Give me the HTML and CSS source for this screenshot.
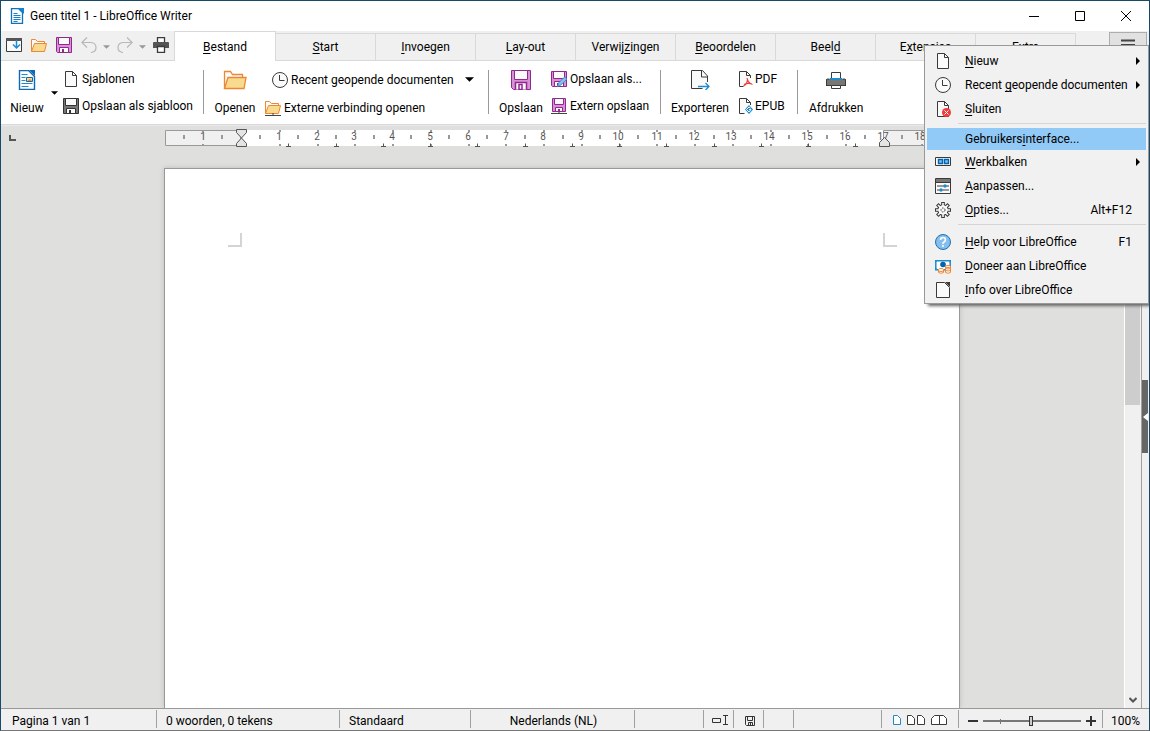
FILE: index.html
```html
<!DOCTYPE html>
<html lang="nl">
<head>
<meta charset="utf-8">
<title>Geen titel 1 - LibreOffice Writer</title>
<link rel="stylesheet" href="styles.css">
</head>
<body>
<svg class="sprite" aria-hidden="true">
  <defs>
    <symbol id="page" viewBox="0 0 16 16"><path d="M2.500 .5h7l4 4v11h-11z" fill="#fafafa" stroke="#3a3a38"/><path d="M9.500 .5v4h4" fill="none" stroke="#3a3a38"/></symbol>
    <symbol id="clock" viewBox="0 0 16 16"><circle cx="8" cy="8" r="7.500" fill="#fafafa" stroke="#3a3a38"/><path d="M7.500 3v5.500h5" fill="none" stroke="#3a3a38"/></symbol>
    <symbol id="folder" viewBox="0 0 24 20"><path d="M1.500 18.500v-17h6l2 3h10v3" fill="#fafafa" stroke="#ed8733" stroke-width="1.300"/><path d="M1.500 18.500 5 7.500h18l-2 11z" fill="#f8db8f" stroke="#ed8733" stroke-width="1.300"/></symbol>
    <symbol id="folder-small" viewBox="0 0 16 14"><path d="M.5 13.500V1.500h4l2 2h7v2" fill="#fafafa" stroke="#ed8733"/><path d="m.5 13.500 3-8h12l-2 8z" fill="#f8db8f" stroke="#ed8733"/></symbol>
    <symbol id="floppy" viewBox="0 0 20 20"><path d="M.5.5h19v19H2.500l-2-2z" fill="#d692d4" stroke="#92278f"/><path d="M3.500.5h13v9h-13z" fill="#fafafa" stroke="#92278f"/><path d="M4.500 19.500v-7h11v7" fill="#fafafa" stroke="#92278f" stroke-width="1.500"/><path d="M8 14.500h3v5H8z" fill="#fff" stroke="#92278f" stroke-width="1.500"/></symbol>
    <symbol id="floppy-small" viewBox="0 0 16 16"><path d="M.5.5h15v15h-14l-1-1z" fill="#d692d4" stroke="#92278f"/><path d="M2.500.5h11v7h-11z" fill="#fafafa" stroke="#92278f"/><path d="M3.500 15.500v-5h9v5z" fill="#fafafa" stroke="#92278f"/><path d="M6 12h2v4H6z" fill="#92278f"/></symbol>
    <symbol id="down" viewBox="0 0 8 4"><path d="M0 0h8L4 4z" fill="currentColor"/></symbol>
  </defs>
</svg>

<header class="titlebar">
  <svg class="i16" viewBox="0 0 16 16"><path d="M2.500.5h7l4 4v11h-11z" fill="#fff" stroke="#0e73bb" stroke-width="1.300"/><path d="M9 0h6v6z" fill="#0e85cd"/><path d="M4.500 5.500h4m-4 2h7m-7 2h7m-7 2h7m-7 2h4" stroke="#0e85cd"/></svg>
  <h1>Geen titel 1 - LibreOffice Writer</h1>
  <div class="window-buttons">
    <button aria-label="Minimaliseren"><svg class="i10" viewBox="0 0 10 10"><path d="M0 5.500h10" stroke="#000"/></svg></button>
    <button aria-label="Maximaliseren"><svg class="i10" viewBox="0 0 10 10"><path d="M.5.5h9v9h-9z" fill="none" stroke="#000"/></svg></button>
    <button aria-label="Sluiten"><svg class="i10" viewBox="0 0 10 10"><path d="m0 0 10 10M10 0 0 10" stroke="#000"/></svg></button>
  </div>
</header>

<nav class="tabbar">
  <div class="quick">
    <button aria-label="Werkbalk"><svg class="i16" viewBox="0 0 16 16"><path d="M.5 1.500h15v13H.5z" fill="#fafafa" stroke="#3a3a38"/><path d="M0 1h16v3H0z" fill="#555"/><path d="M10.500 3v8M7 7.500l3.500 3.500L14 7.500" fill="none" stroke="#1e8bcd" stroke-width="1.500"/></svg></button>
    <button aria-label="Openen"><svg class="i16"><use href="#folder-small"/></svg></button>
    <button aria-label="Opslaan"><svg class="i16"><use href="#floppy-small"/></svg></button>
    <button class="dim" aria-label="Ongedaan maken"><svg class="i16" viewBox="0 0 16 16"><path d="M6 .5.800 5.500 6 10.500M1 5.500h8q6 0 6 5 0 4.500-5 5" fill="none" stroke="currentColor" stroke-width="1.200"/></svg></button>
    <button class="dim arrow" aria-label="Meer ongedaan maken"><svg class="caret"><use href="#down"/></svg></button>
    <button class="dim" aria-label="Opnieuw"><svg class="i16" viewBox="0 0 16 16"><path d="m10 .5 5.200 5-5.200 5M15 5.500H7q-6 0-6 5Q1 15 6 15.500" fill="none" stroke="currentColor" stroke-width="1.200"/></svg></button>
    <button class="dim arrow" aria-label="Meer opnieuw"><svg class="caret"><use href="#down"/></svg></button>
    <button aria-label="Afdrukken"><svg class="i16" viewBox="0 0 16 16"><path d="M4.500 5V.5h7V5" fill="#fff" stroke="#3a3a38" stroke-width="1.300"/><path d="M0 6q0-1 1-1h14q1 0 1 1v5H0z" fill="#555"/><path d="M4.500 9.500h7v6h-7z" fill="#fff" stroke="#3a3a38" stroke-width="1.300"/></svg></button>
  </div>
  <div class="tabs">
    <button class="tab active"><u>B</u>estand</button>
    <button class="tab"><u>S</u>tart</button>
    <button class="tab"><u>I</u>nvoegen</button>
    <button class="tab"><u>L</u>ay-out</button>
    <button class="tab">Verwij<u>z</u>ingen</button>
    <button class="tab"><u>B</u>eoordelen</button>
    <button class="tab">Beel<u>d</u></button>
    <button class="tab">E<u>x</u>tensies</button>
    <button class="tab">E<u>x</u>tra</button>
  </div>
  <button class="burger" aria-label="Menu" aria-expanded="true"><svg viewBox="0 0 14 12"><path d="M0 1.500h14M0 6h14M0 10.500h14" stroke="#444" stroke-width="2"/></svg></button>
</nav>

<section class="ribbon">
  <div class="group g-new">
    <button class="big"><svg class="i20" viewBox="0 0 20 20"><path d="M2.500.5h9l6 6v13h-15z" fill="#fff" stroke="#0e69b5" stroke-width="1.400"/><path d="M12 0h6v6z" fill="#0e69b5"/><path d="M4.500 4.500h6m-6 3h4m-4 3h4m-4 3h11m-11 3h7" stroke="#1e8bcd"/><path d="M9.500 7.500h6v4h-6z" fill="#f8db8f" stroke="#0e69b5"/><path d="m10 11 3-2 2 2z" fill="#ed8733"/></svg>Nieuw</button>
    <button class="drop" aria-label="Nieuw, opties"><svg class="caret"><use href="#down"/></svg></button>
    <div class="stack">
      <button><svg class="i16 slim" viewBox="2 0 12 16"><use href="#page" width="16" height="16"/></svg>Sjablonen</button>
      <button><svg class="i16" viewBox="0 0 16 16"><path d="M.5.500h15v15h-15z" fill="#777" stroke="#333"/><path d="M2.500.5h11v7h-11zM3.500 15.500v-5h9v5z" fill="#fafafa" stroke="#333"/><path d="M6 12h2v4H6z" fill="#333"/></svg>Opslaan als sjabloon</button>
    </div>
  </div>
  <div class="group g-open">
    <button class="big"><svg class="i24"><use href="#folder"/></svg>Openen</button>
    <div class="stack">
      <button class="recent"><svg class="i16"><use href="#clock"/></svg>Recent geopende documenten<svg class="caret wide"><use href="#down"/></svg></button>
      <button><svg class="i16" viewBox="0 0 16 16"><use href="#folder-small" width="16" height="14"/><path d="M0 15.500h16M8 13v2" stroke="#444"/></svg>Externe verbinding openen</button>
    </div>
  </div>
  <div class="group g-save">
    <button class="big"><svg class="i20"><use href="#floppy"/></svg>Opslaan</button>
    <div class="stack">
      <button><svg class="i16" viewBox="0 0 16 16"><use href="#floppy-small" width="16" height="16"/><path d="m6.500 15.500 1-3.500 6-6 2.500 2-6 6z" fill="#83beec" stroke="#3986c6" stroke-width=".8"/></svg>Opslaan als...</button>
      <button><svg class="i16" viewBox="0 0 16 16"><path d="M1.500.5h13v13h-13z" fill="#d692d4" stroke="#92278f"/><path d="M3.500.5h9v6h-9zM4.500 13.500v-4h7v4z" fill="#fafafa" stroke="#92278f"/><path d="M7 11h2v3H7z" fill="#92278f"/><path d="M0 15.500h16M8 14v1" stroke="#444"/></svg>Extern opslaan</button>
    </div>
  </div>
  <div class="group g-export">
    <button class="big"><svg class="i20" viewBox="0 0 20 20"><path d="M17.500 12V6l-5-5.500h-11v18h11" fill="#fafafa" stroke="#3a3a38"/><path d="M11.500.5V7h6" fill="none" stroke="#3a3a38"/><path d="M8 16.500h11M15.500 13l3.500 3.500-3.500 3.500" fill="none" stroke="#1e8bcd" stroke-width="1.300"/></svg>Exporteren</button>
    <div class="stack">
      <button><svg class="i16" viewBox="0 0 16 16"><path d="M13.500 7V4.500l-4-4h-7v15h4" fill="#fafafa" stroke="#3a3a38"/><path d="M9.500.5v4h4" fill="none" stroke="#3a3a38"/><path d="M10 7q1 5 5.500 6.500M10.500 8q0 5-4 7M7 13.500q4-2 8-.5" fill="none" stroke="#ed3d3b" stroke-width="1.200"/></svg>PDF</button>
      <button><svg class="i16" viewBox="0 0 16 16"><path d="M13.500 7V4.500l-4-4h-7v15h5" fill="#fafafa" stroke="#3a3a38"/><path d="M9.500.5v4h4" fill="none" stroke="#3a3a38"/><path d="m12 7 4 4.500-4 4.500-4-4.500z" fill="#1e8bcd"/><path d="m13.500 10-1.500-1-2.500 2.500L12 14l2-2.500h-2" fill="none" stroke="#fff"/></svg>EPUB</button>
    </div>
  </div>
  <div class="group g-print">
    <button class="big"><svg class="i20" viewBox="0 0 20 20"><path d="M5.500 9V2.500h9V9" fill="#fff" stroke="#3a3a38"/><path d="M0 9h20v7H0z" fill="#797774"/><path d="M.5 16V10q0-1 1-1h2M19.500 16v-6q0-1-1-1h-2M0 15.500h20" fill="none" stroke="#3a3a38"/><path d="M4 8h12v2H4z" fill="#1e8bcd"/><path d="M5.500 15.500h9v3h-9z" fill="#fff" stroke="#3a3a38"/></svg>Afdrukken</button>
  </div>
</section>

<main class="work">
  <div class="canvas">
    <svg class="tabstop" viewBox="0 0 7 6"><path d="M1 0v5h6" fill="none" stroke="#555" stroke-width="2"/></svg>
    <svg class="ruler" viewBox="0 0 796 20">
      <path d="M1 2h794v16H1z" fill="#fff"/>
      <path d="M1.500 2.500h75v15h-75zM719.500 2.500h75v15h-75z" fill="#f0f0f0" stroke="#999"/>
      <path class="ticks" d="M20 7v4m38-4v4m38-4v4m38-4v4m38-4v4m38-4v4m37-4v4m38-4v4m38-4v4m38-4v4m38-4v4m37-4v4m38-4v4m38-4v4m38-4v4m37-4v4m38-4v4m38-4v4m38-4v4m37-4v4"/>
      <path class="ticks" d="M39 2v2m77-2v2m38-2v2m37-2v2m38-2v2m38-2v2m38-2v2m37-2v2m38-2v2m38-2v2m38-2v2m37-2v2m38-2v2m38-2v2m38-2v2m37-2v2m38-2v2m76-2v2"/>
      <path class="ticks" d="M39 16v2m77-2v2m38-2v2m37-2v2m38-2v2m38-2v2m38-2v2m37-2v2m38-2v2m38-2v2m38-2v2m37-2v2m38-2v2m38-2v2m38-2v2m37-2v2m38-2v2m76-2v2"/>
      <path d="M122 18.500h5m-2.500-3v3M170 18.500h5m-2.500-3v3M217 18.500h5m-2.500-3v3M264 18.500h5m-2.500-3v3M311 18.500h5m-2.500-3v3M359 18.500h5m-2.500-3v3M406 18.500h5m-2.500-3v3M453 18.500h5m-2.500-3v3M500 18.500h5m-2.500-3v3M548 18.500h5m-2.500-3v3M595 18.500h5m-2.500-3v3M642 18.500h5m-2.500-3v3M689 18.500h5m-2.500-3v3" stroke="#555" fill="none"/>
      <g class="numbers"><text x="39" y="12">1</text><text x="115" y="12">1</text><text x="153" y="12">2</text><text x="190" y="12">3</text><text x="228" y="12">4</text><text x="266" y="12">5</text><text x="304" y="12">6</text><text x="342" y="12">7</text><text x="379" y="12">8</text><text x="417" y="12">9</text><text x="454" y="12">10</text><text x="493" y="12">11</text><text x="530" y="12">12</text><text x="567" y="12">13</text><text x="605" y="12">14</text><text x="643" y="12">15</text><text x="681" y="12">16</text><text x="719" y="12">17</text><text x="756" y="12">18</text></g>
      <path d="M72.500 1.500h10v3l-5 5.500-5-5.500zM72.500 18.500h10v-3l-5-5.500-5 5.500zM715.500 18.500h10v-4l-5-5-5 5z" fill="#e4e4e4" stroke="#555"/>
    </svg>
    <article class="paper" aria-label="Document">
      <svg class="corner" viewBox="0 0 14 14"><path d="M13 0v13H0" fill="none" stroke="#d4d4d4" stroke-width="2"/></svg>
      <svg class="corner" viewBox="0 0 14 14"><path d="M1 0v13h13" fill="none" stroke="#d4d4d4" stroke-width="2"/></svg>
    </article>
  </div>
  <div class="scrollbar"><div class="thumb"></div><button aria-label="Omlaag"><svg viewBox="0 0 8 6"><path d="m.5 1 3.500 3.500L7.500 1" fill="none" stroke="#555" stroke-width="2"/></svg></button></div>
  <div class="sidebar"><button aria-label="Zijbalk tonen"><svg viewBox="0 0 5 8"><path d="M5 0v8L0 4z" fill="#fff"/></svg></button></div>
</main>

<footer class="status">
  <span>Pagina 1 van 1</span>
  <span>0 woorden, 0 tekens</span>
  <span>Standaard</span>
  <span class="center">Nederlands (NL)</span>
  <span></span>
  <span class="center"><svg class="i16" viewBox="0 0 16 16"><path d="M.5 5.500h8v4h-8zM11 2.500h5M11 11.500h5M13.500 2.500v9" fill="none" stroke="#333"/></svg></span>
  <span class="center"><svg class="i10" viewBox="0 0 10 10"><path d="M.5.5h9v9h-8l-1-1zM2.500.5v4h5v-4M3.500 9.500v-3h4v3M5.500 7v2" fill="none" stroke="#333"/></svg></span>
  <span></span>
  <span></span>
  <span class="center views">
    <button aria-label="Enkele pagina"><svg viewBox="0 0 8 10"><path d="M.5.5h4l3 3v6h-7z" fill="#fff" stroke="#1e8bcd"/></svg></button>
    <button aria-label="Meerdere pagina's"><svg class="pair" viewBox="0 0 18 10"><path d="M.5.5h4l3 3v6h-7zM10.500.5h4l3 3v6h-7z" fill="#fff" stroke="#3a3a38"/></svg></button>
    <button aria-label="Boek"><svg class="pair" viewBox="0 0 18 10"><path d="M8.500.5h-5l-3 3v6h8zM8.500.5h4l3 3v6h-7z" fill="#fff" stroke="#3a3a38"/></svg></button>
  </span>
  <span class="zoom">
    <button aria-label="Uitzoomen"><svg class="i10" viewBox="0 0 10 10"><path d="M0 5h10" stroke="#333" stroke-width="2"/></svg></button>
    <input type="range" min="0" max="100" value="49" aria-label="Zoom">
    <button aria-label="Inzoomen"><svg class="i10" viewBox="0 0 10 10"><path d="M0 5h10M5 0v10" stroke="#333" stroke-width="2"/></svg></button>
  </span>
  <span>100%</span>
</footer>

<div class="menu" role="menu">
  <button role="menuitem"><svg class="i16"><use href="#page"/></svg><span><u>N</u>ieuw</span><i class="sub"></i></button>
  <button role="menuitem"><svg class="i16"><use href="#clock"/></svg><span>Recent <u>g</u>eopende documenten</span><i class="sub"></i></button>
  <button role="menuitem"><svg class="i16" viewBox="0 0 16 16"><use href="#page" width="16" height="16"/><circle cx="11.500" cy="11.500" r="4.500" fill="#ed3d3b"/><path d="m9.500 9.500 4 4m0-4-4 4" stroke="#fff"/></svg><span><u>S</u>luiten</span></button>
  <hr>
  <button role="menuitem" class="selected"><span class="i16"></span><span>Gebruikers<u>i</u>nterface...</span></button>
  <button role="menuitem"><svg class="i16" viewBox="0 0 16 16"><path d="M.5 3.500h15v8H.5z" fill="#fafafa" stroke="#3a3a38"/><path d="M3.500 5.500h4v4h-4zM9.500 5.500h4v4h-4z" fill="#83beec" stroke="#0063b1" stroke-width="1.400"/></svg><span><u>W</u>erkbalken</span><i class="sub"></i></button>
  <button role="menuitem"><svg class="i16" viewBox="0 0 16 16"><path d="M.5.500h15v15h-15z" fill="#fafafa" stroke="#3a3a38"/><path d="M1 1h14v3H1z" fill="#797774"/><path d="M.5 4.500h15" stroke="#3a3a38"/><path d="M2 8h12M2 12h12" stroke="#3a3a38"/><circle cx="10" cy="8" r="1.700" fill="#1e8bcd"/><circle cx="6" cy="12" r="1.700" fill="#1e8bcd"/></svg><span><u>A</u>anpassen...</span></button>
  <button role="menuitem"><svg class="i16" viewBox="0 0 16 16"><path d="M8 0v16M0 8h16M2.300 2.300l11.400 11.400M13.700 2.300 2.300 13.700" stroke="#3a3a38" stroke-width="3.600"/><circle cx="8" cy="8" r="5.700" fill="#3a3a38"/><path d="M8 1v14M1 8h14M3 3l10 10M13 3 3 13" stroke="#fafafa" stroke-width="1.600"/><circle cx="8" cy="8" r="4.700" fill="#fafafa"/><circle cx="8" cy="8" r="2" fill="none" stroke="#3a3a38" stroke-dasharray="1.500 1"/></svg><span><u>O</u>pties...</span><kbd>Alt+F12</kbd></button>
  <hr>
  <button role="menuitem"><svg class="i16" viewBox="0 0 16 16"><circle cx="8" cy="8" r="7.500" fill="#83beec" stroke="#1e72b8"/><path d="M5.500 6q0-2.500 2.500-2.500T10.500 6Q10.500 7 9 8T8 10M8 11v2" fill="none" stroke="#fff" stroke-width="1.600"/></svg><span><u>H</u>elp voor LibreOffice</span><kbd>F1</kbd></button>
  <button role="menuitem"><svg class="i16" viewBox="0 0 16 16"><path d="M.8 2.800h14.400v9H.8z" fill="#fff" stroke="#1e8bcd" stroke-width="1.500"/><path d="M0 2h3L0 5zM16 2v3l-3-3zM0 12v-3l3 3z" fill="#1e8bcd"/><circle cx="8" cy="6.500" r="2.800" fill="#0063b1"/><g fill="#fff" stroke="#ed8733"><ellipse cx="6" cy="11.500" rx="2.500" ry="1"/><path d="M3.500 11.500v3q2.500 1.500 5 0v-3M3.500 13q2.500 1 5 0"/><path d="M10.500 8.500v6q2.500 1.500 5 0v-6M10.500 10.500q2.500 1 5 0M10.500 12.500q2.500 1 5 0"/><ellipse cx="13" cy="8.500" rx="2.500" ry="1"/></g></svg><span><u>D</u>oneer aan LibreOffice</span></button>
  <button role="menuitem"><svg class="i16" viewBox="0 0 16 16"><path d="M1.500.5h8l5 5v10h-13z" fill="#fafafa" stroke="#3a3a38"/><path d="M10 0h5v5z" fill="#3a3a38"/></svg><span><u>I</u>nfo over LibreOffice</span></button>
</div>
</body>
</html>
```
FILE: styles.css
```css
* { box-sizing: border-box; }

body {
  margin: 0;
  height: 100vh;
  display: flex;
  flex-direction: column;
  position: relative;
  overflow: hidden;
  border: 1px solid #17496b;
  border-bottom-color: #777;
  background: #f0f0f0;
  color: #000;
  font: 12px/16px Roboto, "Open Sans", sans-serif;
}

button {
  font: inherit;
  color: inherit;
  background: none;
  border: 0;
  padding: 0;
  display: flex;
  align-items: center;
  white-space: nowrap;
}

svg { display: block; flex: none; }
u { text-underline-offset: 2px; }
.sprite { position: absolute; width: 0; height: 0; }
.i10 { width: 10px; height: 10px; }
.i16 { width: 16px; height: 16px; }
.i20 { width: 20px; height: 20px; }
.i24 { width: 24px; height: 20px; }
.slim { width: 12px; }
.caret { width: 7px; height: 4px; }
.caret.wide { width: 9px; height: 5px; margin-left: 8px; }

.titlebar {
  flex: none;
  height: 30px;
  display: flex;
  align-items: center;
  gap: 5px;
  padding-left: 8px;
  background: #fff;
}
.titlebar h1 { margin: 0; font-size: 12px; font-weight: 400; }
.window-buttons { display: flex; margin-left: auto; }
.window-buttons button { width: 46px; height: 28px; justify-content: center; }

.tabbar { flex: none; height: 30px; display: flex; align-items: flex-end; }
.quick {
  width: 173px;
  height: 30px;
  display: flex;
  align-items: center;
  gap: 9px;
  padding: 0 5px 2px;
  border-bottom: 1px solid #d9d9d9;
}
.quick .arrow { margin: 4px -2px 0 -3px; }
.dim { color: #b8b8b8; }
.dim.arrow { color: #999; }
.tabs { flex: 1; display: flex; align-items: flex-end; height: 30px; box-shadow: inset 0 -1px #d9d9d9; }
.tab {
  width: 100px;
  height: 28px;
  justify-content: center;
  border: 1px solid #d9d9d9;
  border-left: 0;
}
.tab.active {
  width: 102px;
  height: 30px;
  border-left: 1px solid #d9d9d9;
  border-bottom: 0;
  background: #fff;
}
.burger {
  width: 38px;
  height: 29px;
  justify-content: center;
  margin-right: 2px;
  padding-bottom: 4px;
  background: #e1e1e1;
  border: 1px solid #adadad;
}
.burger svg { width: 14px; height: 12px; }

.ribbon { flex: none; height: 64px; display: flex; background: #fff; border-bottom: 1px solid #d9d9d9; }
.group { display: flex; padding: 9px 0 0 10px; position: relative; }
.group + .group::before { content: ""; position: absolute; left: 0; top: 9px; width: 1px; height: 44px; background: #999; }
.big { height: 46px; flex-direction: column; justify-content: space-between; flex: none; }
.stack { display: flex; flex-direction: column; gap: 10px; }
.stack button { height: 17px; gap: 3px; }
.g-new { width: 202px; padding-left: 8px; }
.g-new .big { width: 36px; }
.g-new .stack { padding-left: 5px; }
.g-new .slim { margin: 0 2px; }
.drop { width: 13px; height: 29px; padding-top: 16px; justify-content: flex-end; }
.g-open { width: 285px; padding-left: 11px; }
.g-open .big { width: 42px; }
.g-open .stack { padding: 1px 0 0 9px; gap: 11px; }
.recent { margin-left: 7px; }
.g-save { width: 172px; }
.g-save .big { width: 46px; }
.g-save .stack { padding-left: 7px; }
.g-export { width: 137px; }
.g-export .big { width: 60px; }
.g-export .stack { padding-left: 7px; }
.g-export .stack button { gap: 2px; }
.g-print { padding-left: 12px; }

.work { flex: 1; min-height: 0; display: flex; background: #dfdfde; border-top: 1px solid #e9e9e9; }
.canvas { flex: 1; min-width: 0; display: flex; flex-direction: column; align-items: center; position: relative; overflow: hidden; padding: 2px 1px 0 0; }
.tabstop { position: absolute; left: 8px; top: 9px; width: 7px; height: 6px; }
.ruler { width: 796px; height: 20px; }
.ticks { stroke: #999; stroke-width: 2; }
.numbers { font-size: 10px; text-anchor: middle; fill: #555; }
.paper {
  flex: 1;
  width: 796px;
  margin-top: 20px;
  padding: 64px 62px 0 63px;
  display: flex;
  justify-content: space-between;
  background: #fff;
  border: 1px solid #999;
  border-bottom: 0;
  box-shadow: 0 0 5px #bbb;
}
.corner { width: 14px; height: 14px; }

.scrollbar { width: 17px; display: flex; flex-direction: column; background: #f0f0f0; border-left: 1px solid #fff; }
.thumb { height: 279px; margin-right: 1px; background: #cdcdcd; }
.scrollbar button { margin-top: auto; height: 17px; justify-content: center; }
.scrollbar button svg { width: 8px; height: 6px; }
.sidebar { width: 8px; padding-top: 254px; background: #f0f0f0; border-left: 1px solid #a0a0a0; }
.sidebar button { width: 6px; height: 73px; justify-content: flex-end; background: #666; }
.sidebar svg { width: 5px; height: 8px; }

.status {
  flex: none;
  height: 22px;
  display: grid;
  grid-template-columns: 156px 183px 131px 164px 69px 30px 30px 30px 1fr 77px 144px 46px;
  border-top: 1px solid #999;
}
.status > span {
  display: flex;
  align-items: center;
  height: 18px;
  margin-top: 1px;
  padding: 3px 0 0 9px;
  border-right: 1px solid #a0a0a0;
  white-space: nowrap;
}
.status > span:first-child { padding-left: 11px; }
.status > span:last-child { border: 0; padding-left: 8px; }
.status > .center { justify-content: center; padding: 3px 0 0 2px; }
.status > .views { gap: 6px; padding-top: 2px; }
.views svg { width: 8px; height: 10px; }
.views .pair { width: 18px; }
.status > .zoom { gap: 5px; padding-left: 9px; }
.zoom input {
  appearance: none;
  flex: none;
  width: 98px;
  height: 12px;
  margin: 0;
  background: linear-gradient(#777, #777) 17px 4px / 1px 5px no-repeat, linear-gradient(#777, #777) 0 5px / 100% 2px no-repeat;
}
.zoom input::-webkit-slider-thumb { appearance: none; width: 4px; height: 10px; background: #ccc; border: 1px solid #333; }

.menu {
  position: absolute;
  top: 44px;
  right: 0;
  width: 225px;
  padding: 3px 2px 1px;
  background: #f1f1f1;
  border: 1px solid #999;
  box-shadow: 3px 3px 3px -1px #666;
}
.menu button { width: 100%; height: 24px; padding: 0 14px 0 8px; }
.menu .i16 { margin: 0 14px 1px 0; }
.menu .selected { height: 22px; background: #91c9f7; }
.menu hr { margin: 2px 0 4px 31px; border: 0; border-top: 1px solid #d5d5d5; }
.menu hr:last-of-type { margin-bottom: 5px; }
.menu kbd { margin-left: auto; font: inherit; }
.sub { margin: 0 -8px 0 auto; border: 4px solid transparent; border-left-color: #000; border-right: 0; }
```
